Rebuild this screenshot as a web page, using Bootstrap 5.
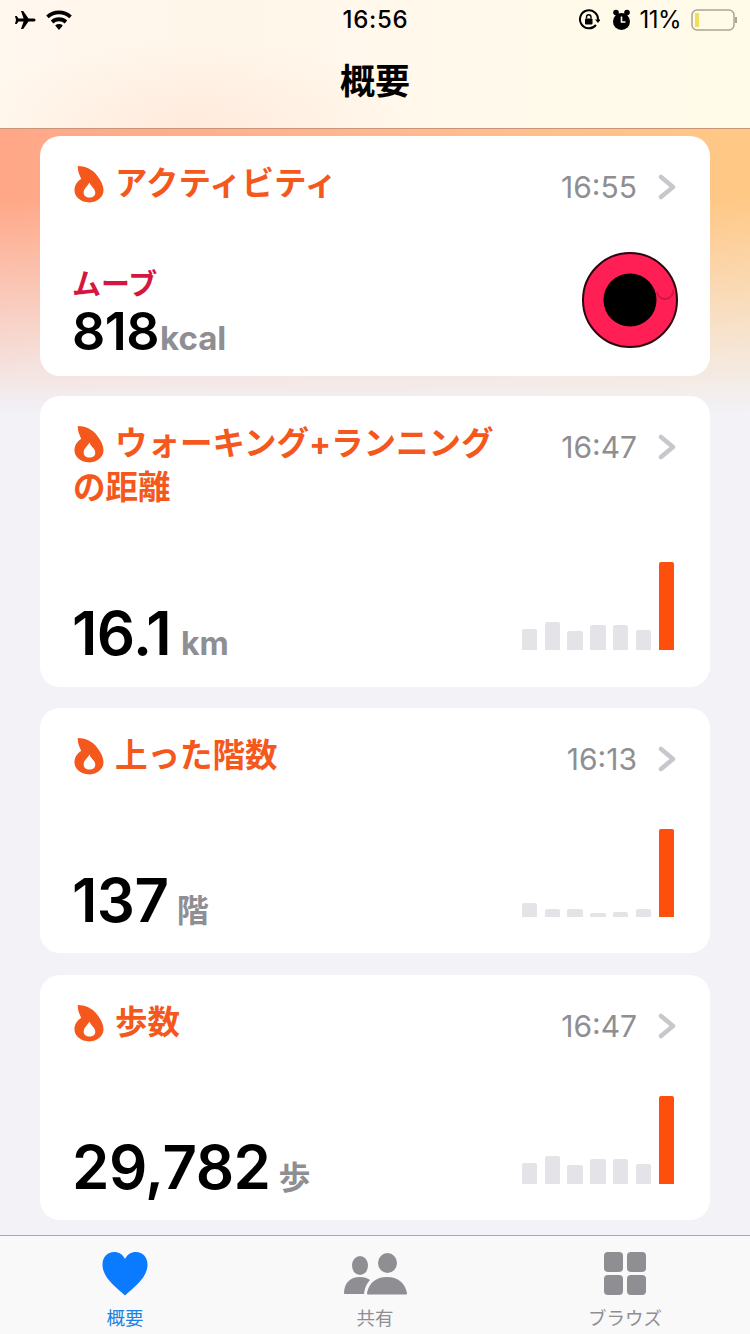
<!DOCTYPE html>
<html lang="ja">
<head>
    <meta charset="UTF-8">
    <meta name="viewport" content="width=device-width, initial-scale=1.0">
    <title>概要</title>
    <link href="https://cdn.jsdelivr.net/npm/bootstrap@5.3.2/dist/css/bootstrap.min.css" rel="stylesheet">
    <style>
        html, body {
            height: 1334px;
            overflow: hidden;
        }
        body {
            font-family: Inter, "Noto Sans CJK JP", sans-serif;
            background-color: #f2f2f7;
            color: #000;
            width: 750px;
        }
        .top-area {
            height: 129px;
            background:
                radial-gradient(ellipse 220px 90px at 190px 129px, rgba(255,225,210,.55), rgba(255,225,210,0)),
                linear-gradient(90deg, #fff8ee 0%, #fff6ea 30%, #fff9ec 60%, #fffbe8 100%);
            border-bottom: 1px solid #c9957a;
        }
        .status-bar {
            height: 40px;
            padding: 0 13px 0 14px;
        }
        .status-side {
            width: 270px;
        }
        .status-time {
            font-size: 24px;
            font-weight: 500;
            letter-spacing: .7px;
        }
        .status-pct {
            font-size: 24px;
            letter-spacing: -.5px;
            margin-right: 10px;
        }
        .nav-title {
            font-size: 35px;
            font-weight: 700;
            line-height: 1;
            padding-top: 24px;
        }
        .scroll-area {
            height: 1106px;
            padding: 7px 40px 0;
            background:
                linear-gradient(180deg, rgba(242,242,247,0) 0, rgba(242,242,247,0) 70px, #f2f2f7 285px),
                linear-gradient(90deg, #ffa787 0%, #ffb88f 50%, #ffc985 100%);
            overflow: hidden;
        }
        .metric-card {
            background: #fff;
            border-radius: 20px;
            padding: 0 34px 0 33px;
            margin-bottom: 21px;
            position: relative;
        }
        .card-move { height: 240px; margin-bottom: 20px; }
        .card-walk { height: 291px; }
        .card-floors { height: 245px; margin-bottom: 22px; }
        .card-steps { height: 245px; }
        .card-head {
            padding-top: 26px;
            gap: 11px;
        }
        .card-title-text {
            font-size: 32.5px;
            font-weight: 700;
            color: #f4581c;
            line-height: 44px;
            white-space: nowrap;
        }
        .card-time {
            font-size: 30px;
            color: #8e8e93;
            line-height: 46px;
            white-space: nowrap;
            margin: 2px 0 -4px;
        }
        .chev {
            margin: 12px 0 0 10px;
            flex: none;
        }
        .flame {
            flex: none;
            margin-top: 3px;
        }
        .metric-value {
            font-size: 52px;
            font-weight: 600;
            line-height: 1;
            letter-spacing: -.5px;
        }
        .metric-big {
            font-size: 60px;
            font-weight: 600;
            letter-spacing: -.5px;
            margin-bottom: -13px;
        }
        .metric-unit {
            font-size: 32px;
            font-weight: 700;
            color: #8e8e93;
            margin-left: 8px;
            letter-spacing: 0;
        }
        .unit-tight { margin-left: 1px; font-size: 33px; }
        .unit-km { margin-left: 10px; }
        .move-label {
            font-size: 29px;
            font-weight: 700;
            color: #d5173f;
            line-height: 1;
            margin-bottom: 7px;
        }
        .bottom-row {
            position: absolute;
            left: 32px;
            right: 36px;
            bottom: 36px;
        }
        .bottom-move {
            bottom: 18px;
            right: 32px;
        }
        .bottom-walk {
            bottom: 37px;
        }
        .ring {
            margin-bottom: 10px;
        }
        .bars {
            gap: 7.3px;
            height: 90px;
        }
        .bar {
            width: 15.5px;
            background: #e4e4e8;
            border-radius: 2px 2px 0 0;
        }
        .bar-now { background: #ff4f0c; }
        .tab-bar {
            height: 99px;
            background: #f9f9f9;
            border-top: 1px solid #a9a9ad;
        }
        .tab-item {
            flex: 1 1 0;
            color: #8e8e93;
            font-size: 18.5px;
            line-height: 1;
            padding-top: 15px;
        }
        .tab-item svg { display: block; height: 46px; margin-bottom: 12px; }
        .tab-active { color: #1c82e6; }
    </style>
</head>
<body>

<svg width="0" height="0" class="position-absolute">
    <defs>
        <symbol id="flame" viewBox="0 0 32 40">
            <path fill="#f4581c" d="M5 1C12 1 20 4 25 11c4 5 6.500 10 6.500 15 0 7-6.500 12.500-14.500 12.500C8 38.500 1.500 33 1.500 26c0-5 2.500-9 7-12C7 11 4.500 6 5 1z"/>
            <path fill="#fff" d="M17 18c1 4 6 6 6 10.500 0 3.500-3 5-6 5-3.500 0-6-2-6-5 0-4.500 4-6.500 6-10.500z"/>
        </symbol>
        <symbol id="chev" viewBox="0 0 18 26">
            <path d="M3 3l12 10L3 23" fill="none" stroke="#c7c7cc" stroke-width="4.500" stroke-linecap="round" stroke-linejoin="round"/>
        </symbol>
    </defs>
</svg>

<div class="top-area">
    <div class="status-bar d-flex align-items-center justify-content-between">
        <div class="status-side d-flex align-items-center gap-2">
            <svg width="22" height="20" viewBox="0 0 22 20"><path d="M21.500 10c0-1-1-1.500-2-1.500h-5L9.200 1H7l2.600 7.500H4.500L2.700 6H1l1 4-1 4h1.700l1.800-2.500h5.100L7 19h2.200l5.300-7.500h5c1 0 2-.5 2-1.500z"/></svg>
            <svg width="30" height="22" viewBox="0 0 30 22"><path d="M15 21l-3.800-4.400a5.600 5.600 0 0 1 7.600 0z"/><path d="M9.300 14.400l-2.500-2.800a12 12 0 0 1 16.400 0l-2.500 2.800a8.400 8.400 0 0 0-11.400 0z"/><path d="M4.700 9.200L2.200 6.400a19 19 0 0 1 25.600 0l-2.500 2.800a15.300 15.300 0 0 0-20.600 0z"/></svg>
        </div>
        <div class="status-time">16:56</div>
        <div class="status-side d-flex align-items-center justify-content-end">
            <svg width="22" height="22" viewBox="0 0 22 22" class="me-2"><path d="M18 16A9 9 0 1 1 20 11" fill="none" stroke="#000" stroke-width="2"/><path d="M17 10.500h5.500L20 14z"/><rect x="7" y="9.500" width="7.500" height="6" rx="1"/><path d="M8.500 9.500V8a2.200 2.200 0 0 1 4.500 0v1.500" fill="none" stroke="#000" stroke-width="1.400"/></svg>
            <svg width="19" height="22" viewBox="0 0 19 22" class="ms-1 me-2"><circle cx="9.500" cy="12.500" r="8.500"/><circle cx="4" cy="3.500" r="2.800"/><circle cx="15" cy="3.500" r="2.800"/><path d="M9.500 7.500v5.500h4" fill="none" stroke="#fffbe8" stroke-width="1.600"/></svg>
            <span class="status-pct">11%</span>
            <svg width="46" height="24" viewBox="0 0 46 24"><rect x="1" y="2" width="42" height="20" rx="5" fill="none" stroke="#a8a690" stroke-width="1.500"/><rect x="4" y="5" width="4" height="14" rx="1" fill="#f2dc5c"/><path d="M45 9v6" stroke="#a8a690" stroke-width="2"/></svg>
        </div>
    </div>
    <div class="nav-title text-center">概要</div>
</div>

<div class="scroll-area">
    <div class="metric-card card-move">
        <div class="card-head d-flex align-items-start">
            <svg class="flame" width="31" height="39"><use href="#flame"/></svg>
            <div class="card-title-text">アクティビティ</div>
            <div class="card-time ms-auto">16:55</div>
            <svg class="chev" width="18" height="26"><use href="#chev"/></svg>
        </div>
        <div class="bottom-row bottom-move d-flex align-items-end justify-content-between">
            <div>
                <div class="move-label">ムーブ</div>
                <div class="metric-value">818<span class="metric-unit unit-tight">kcal</span></div>
            </div>
            <svg class="ring" width="96" height="96" viewBox="0 0 96 96">
                <circle cx="48" cy="48" r="47" fill="#ff1f55" stroke="#2b0510" stroke-width="2"/>
                <circle cx="48" cy="48" r="26.500" fill="#000"/>
                <path d="M75 40a8 8 0 0 0 16-2" fill="none" stroke="#d4164a" stroke-width="2"/>
            </svg>
        </div>
    </div>

    <div class="metric-card card-walk">
        <div class="card-head d-flex align-items-start">
            <svg class="flame" width="31" height="39"><use href="#flame"/></svg>
            <div class="card-title-text">ウォーキング+ランニング</div>
            <div class="card-time ms-auto">16:47</div>
            <svg class="chev" width="18" height="26"><use href="#chev"/></svg>
        </div>
        <div class="card-title-text">の距離</div>
        <div class="bottom-row bottom-walk d-flex align-items-end justify-content-between">
            <div class="metric-value metric-big">16.1<span class="metric-unit unit-km">km</span></div>
            <div class="bars d-flex align-items-end">
                <div class="bar" style="height:21px"></div>
                <div class="bar" style="height:28px"></div>
                <div class="bar" style="height:19px"></div>
                <div class="bar" style="height:25px"></div>
                <div class="bar" style="height:25px"></div>
                <div class="bar" style="height:20px"></div>
                <div class="bar bar-now" style="height:88px"></div>
            </div>
        </div>
    </div>

    <div class="metric-card card-floors">
        <div class="card-head d-flex align-items-start">
            <svg class="flame" width="31" height="39"><use href="#flame"/></svg>
            <div class="card-title-text">上った階数</div>
            <div class="card-time ms-auto">16:13</div>
            <svg class="chev" width="18" height="26"><use href="#chev"/></svg>
        </div>
        <div class="bottom-row d-flex align-items-end justify-content-between">
            <div class="metric-value metric-big">137<span class="metric-unit">階</span></div>
            <div class="bars d-flex align-items-end">
                <div class="bar" style="height:14px"></div>
                <div class="bar" style="height:8px"></div>
                <div class="bar" style="height:8px"></div>
                <div class="bar" style="height:4px"></div>
                <div class="bar" style="height:5px"></div>
                <div class="bar" style="height:8px"></div>
                <div class="bar bar-now" style="height:88px"></div>
            </div>
        </div>
    </div>

    <div class="metric-card card-steps">
        <div class="card-head d-flex align-items-start">
            <svg class="flame" width="31" height="39"><use href="#flame"/></svg>
            <div class="card-title-text">歩数</div>
            <div class="card-time ms-auto">16:47</div>
            <svg class="chev" width="18" height="26"><use href="#chev"/></svg>
        </div>
        <div class="bottom-row d-flex align-items-end justify-content-between">
            <div class="metric-value metric-big">29,782<span class="metric-unit">歩</span></div>
            <div class="bars d-flex align-items-end">
                <div class="bar" style="height:21px"></div>
                <div class="bar" style="height:28px"></div>
                <div class="bar" style="height:19px"></div>
                <div class="bar" style="height:25px"></div>
                <div class="bar" style="height:25px"></div>
                <div class="bar" style="height:20px"></div>
                <div class="bar bar-now" style="height:88px"></div>
            </div>
        </div>
    </div>
</div>

<div class="tab-bar d-flex">
    <div class="tab-item tab-active d-flex flex-column align-items-center">
        <svg width="46" height="46" viewBox="0 0 46 46"><path fill="#0a7aff" d="M23 44.500C14 36 .5 27 .5 13.500.5 6 5.500 1 12 1c5 0 8.800 2.500 11 7 2.200-4.500 6-7 11-7 6.500 0 11.500 5 11.500 12.500C45.500 27 32 36 23 44.500z"/></svg>
        <span>概要</span>
    </div>
    <div class="tab-item d-flex flex-column align-items-center">
        <svg width="66" height="46" viewBox="0 0 66 46" fill="#8e8e93"><ellipse cx="18" cy="14.500" rx="8" ry="9.500"/><ellipse cx="45.500" cy="12" rx="9.500" ry="10"/><path d="M2 43C2 32 8 26 18 26c4 0 7.500 1 10 3-3.500 3.500-5.500 8.500-6 14z"/><path d="M25 42C27 32 34 26 45 26s18 6 20 16c.2 1-.5 1.500-1.500 1.500h-37c-1 0-1.700-.5-1.500-1.500z"/></svg>
        <span>共有</span>
    </div>
    <div class="tab-item d-flex flex-column align-items-center">
        <svg width="44" height="46" viewBox="0 0 44 46" fill="#8e8e93"><rect x="1" y="1" width="19" height="20" rx="4"/><rect x="24" y="1" width="19" height="20" rx="4"/><rect x="1" y="24" width="19" height="20" rx="4"/><rect x="24" y="24" width="19" height="20" rx="4"/></svg>
        <span>ブラウズ</span>
    </div>
</div>

<script src="https://cdn.jsdelivr.net/npm/bootstrap@5.3.2/dist/js/bootstrap.bundle.min.js"></script>
</body>
</html>
